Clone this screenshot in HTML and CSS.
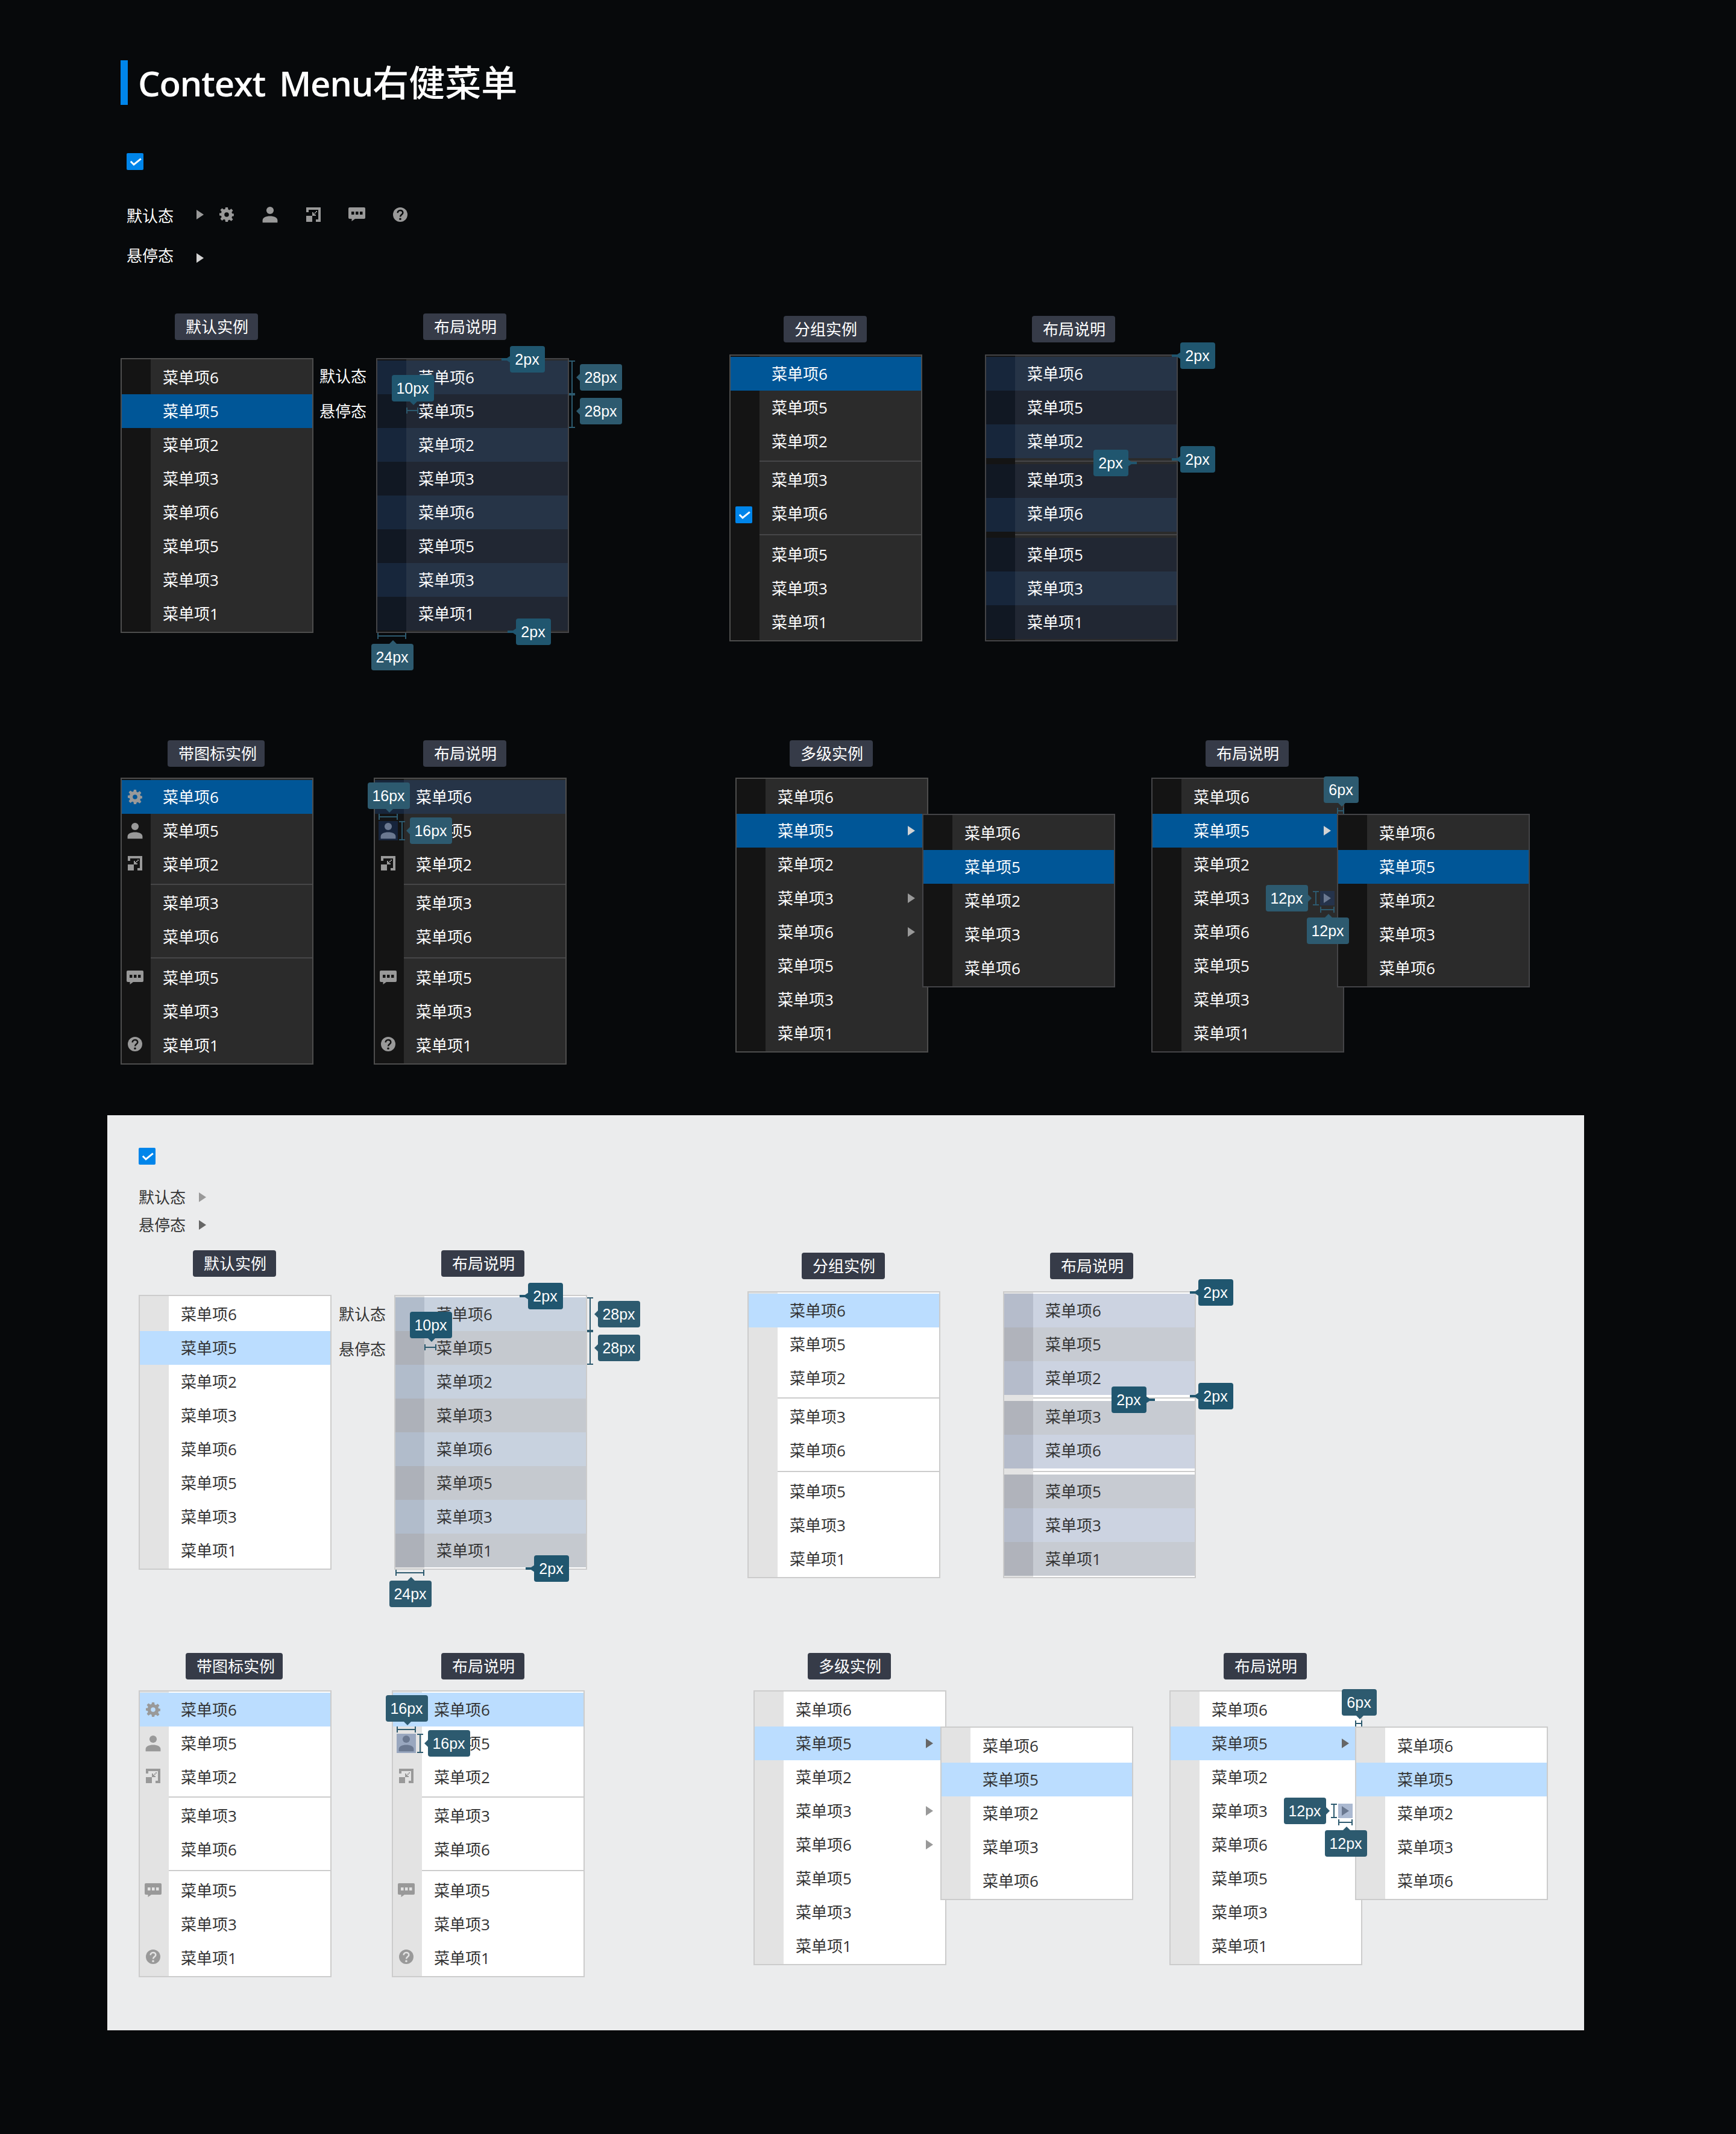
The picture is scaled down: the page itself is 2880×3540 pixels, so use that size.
FILE: index.html
```html
<!DOCTYPE html>
<html lang="zh-CN">
<head>
<meta charset="utf-8">
<title>Context Menu右健菜单</title>
<link rel="stylesheet" href="styles.css">
</head>
<body>
<svg class="defs" aria-hidden="true">
  <defs>
    <mask id="question-cut">
      <rect width="32" height="32" fill="#fff"/>
      <path d="M11.7 13.3c0-2.7 1.8-4.3 4.3-4.3s4.3 1.6 4.3 3.9c0 3.1-4.2 3.3-4.2 6.6" fill="none" stroke="#000" stroke-width="2.6"/>
      <circle cx="16" cy="23.2" r="1.8" fill="#000"/>
    </mask>
    <symbol id="gear" viewBox="0 0 32 32">
      <path fill-rule="evenodd" d="M14 4h4l.5 3.6 2.2.9 2.9-2.2 2.9 2.9-2.2 2.9.9 2.2 2.7.2v3.9l-2.7.4-.9 2.2 2.2 2.9-2.9 2.9-2.9-2.2-2.2.9L18 28h-4l-.5-3.4-2.2-.9-2.9 2.2-2.9-2.9 2.2-2.9-.9-2.2-2.8-.4v-3.9l2.8-.2.9-2.2-2.2-2.9 2.9-2.9 2.9 2.2 2.2-.9zM16 12.2a3.8 3.8 0 1 0 0 7.6 3.8 3.8 0 0 0 0-7.6z"/>
    </symbol>
    <symbol id="person" viewBox="0 0 32 32">
      <circle cx="16" cy="9" r="6.1"/>
      <path d="M3.6 29.2v-3.7c0-4.6 5.6-7 12.4-7s12.4 2.4 12.4 7v3.7z"/>
    </symbol>
    <symbol id="expand" viewBox="0 0 32 32">
      <path d="M4 4h24v24h-8v-4h4V8H8v4H4zM4 18h10v10H4zM14 12h2v2h2v-2h2v-2h2v2h-2v2h-2v2h2v2h-6z"/>
    </symbol>
    <symbol id="chat" viewBox="0 0 32 32">
      <path fill-rule="evenodd" d="M4 4h24a2 2 0 0 1 2 2v15a2 2 0 0 1-2 2H13l-5.5 4V23H4a2 2 0 0 1-2-2V6a2 2 0 0 1 2-2zM7 11v5h4.500v-5zM14 11v5h4.500v-5zM21 11v5h4.500v-5z"/>
    </symbol>
    <symbol id="question" viewBox="0 0 32 32">
      <circle cx="16" cy="16" r="12" mask="url(#question-cut)"/>
    </symbol>
    <symbol id="arrow" viewBox="0 0 12 16"><path d="M0 0l12 8-12 8z"/></symbol>
    <symbol id="check" viewBox="0 0 28 28"><path d="M6.800 13.800L12 19 23.800 9.300" fill="none" stroke="#fff" stroke-width="3"/></symbol>
  </defs>
</svg>

<main class="sheet">
  <header class="header">
    <h1 class="title"><span class="title-latin">Context Menu</span>右健菜单</h1>
  </header>

  <section class="theme dark">
    <svg class="checkbox"><use href="#check"/></svg>
    <div class="legend">
      <div class="legend-row"><span class="legend-label">默认态</span><svg class="arrow"><use href="#arrow"/></svg>
        <div class="legend-icons"><svg class="icon"><use href="#gear"/></svg><svg class="icon"><use href="#person"/></svg><svg class="icon"><use href="#expand"/></svg><svg class="icon"><use href="#chat"/></svg><svg class="icon"><use href="#question"/></svg></div></div>
      <div class="legend-row hovered"><span class="legend-label">悬停态</span><svg class="arrow strong"><use href="#arrow"/></svg></div>
    </div>

    <div class="row row-basic">
      <section class="figure">
        <h2 class="tag">默认实例</h2>
        <div class="stage">
          <ul class="menu"><li><span>菜单项6</span></li><li class="active"><span>菜单项5</span></li><li><span>菜单项2</span></li><li><span>菜单项3</span></li><li><span>菜单项6</span></li><li><span>菜单项5</span></li><li><span>菜单项3</span></li><li><span>菜单项1</span></li></ul>
        </div>
      </section>
      <div class="states"><span>默认态</span><span>悬停态</span></div>
      <section class="figure layout">
        <h2 class="tag">布局说明</h2>
        <div class="stage">
          <ul class="menu muted"><li class="band-a"><span>菜单项6</span></li><li class="band-b"><span>菜单项5</span></li><li class="band-a"><span>菜单项2</span></li><li class="band-b"><span>菜单项3</span></li><li class="band-a"><span>菜单项6</span></li><li class="band-b"><span>菜单项5</span></li><li class="band-a"><span>菜单项3</span></li><li class="band-b"><span>菜单项1</span></li></ul>
          <i class="ruler-v item-one-ruler"></i><i class="ruler-v item-two-ruler"></i><i class="ruler-h indent-ruler"></i><i class="ruler-h gutter-ruler"></i>
          <b class="px short deep stub-left pad-top">2px</b>
          <b class="px deep down indent">10px</b>
          <b class="px left item-one">28px</b>
          <b class="px left item-two">28px</b>
          <b class="px short deep stub-left pad-bottom">2px</b>
          <b class="px up gutter">24px</b>
        </div>
      </section>
      <section class="figure grouped">
        <h2 class="tag">分组实例</h2>
        <div class="stage">
          <ul class="menu"><li class="active"><span>菜单项6</span></li><li><span>菜单项5</span></li><li><span>菜单项2</span></li><li class="divider"></li><li class="lift"><span>菜单项3</span></li><li class="lift"><svg class="checkbox"><use href="#check"/></svg><span>菜单项6</span></li><li class="divider"></li><li><span>菜单项5</span></li><li><span>菜单项3</span></li><li><span>菜单项1</span></li></ul>
        </div>
      </section>
      <section class="figure grouped-layout">
        <h2 class="tag">布局说明</h2>
        <div class="stage">
          <ul class="menu muted"><li class="band-a"><span>菜单项6</span></li><li class="band-b"><span>菜单项5</span></li><li class="band-a"><span>菜单项2</span></li><li class="divider"></li><li class="band-b lift"><span>菜单项3</span></li><li class="band-a lift"><span>菜单项6</span></li><li class="divider"></li><li class="band-b"><span>菜单项5</span></li><li class="band-a"><span>菜单项3</span></li><li class="band-b"><span>菜单项1</span></li></ul>
          <b class="px short deep stub-left edge-top">2px</b>
          <b class="px short deep stub-left group-top">2px</b>
          <b class="px short deep stub-right group-bottom">2px</b>
        </div>
      </section>
    </div>

    <div class="row row-rich">
      <section class="figure iconic">
        <h2 class="tag wide">带图标实例</h2>
        <div class="stage">
          <ul class="menu"><li class="active"><svg class="icon"><use href="#gear"/></svg><span>菜单项6</span></li><li><svg class="icon"><use href="#person"/></svg><span>菜单项5</span></li><li><svg class="icon raised"><use href="#expand"/></svg><span>菜单项2</span></li><li class="divider"></li><li class="lift"><span>菜单项3</span></li><li class="lift"><span>菜单项6</span></li><li class="divider"></li><li><svg class="icon"><use href="#chat"/></svg><span>菜单项5</span></li><li><span>菜单项3</span></li><li><svg class="icon raised"><use href="#question"/></svg><span>菜单项1</span></li></ul>
        </div>
      </section>
      <section class="figure iconic-layout">
        <h2 class="tag">布局说明</h2>
        <div class="stage">
          <ul class="menu"><li class="band-first"><span>菜单项6</span></li><li><svg class="icon"><use href="#person"/></svg><span>菜单项5</span></li><li><svg class="icon raised"><use href="#expand"/></svg><span>菜单项2</span></li><li class="divider"></li><li class="lift"><span>菜单项3</span></li><li class="lift"><span>菜单项6</span></li><li class="divider"></li><li><svg class="icon"><use href="#chat"/></svg><span>菜单项5</span></li><li><span>菜单项3</span></li><li><svg class="icon raised"><use href="#question"/></svg><span>菜单项1</span></li></ul>
          <i class="area icon-area"></i><i class="ruler-h icon-width-ruler"></i><i class="ruler-v icon-height-ruler"></i>
          <b class="px down icon-width">16px</b>
          <b class="px left icon-height">16px</b>
        </div>
      </section>
      <section class="figure nested">
        <h2 class="tag">多级实例</h2>
        <div class="stage">
          <ul class="menu"><li><span>菜单项6</span></li><li class="active"><span>菜单项5</span><svg class="arrow strong"><use href="#arrow"/></svg></li><li><span>菜单项2</span></li><li><span>菜单项3</span><svg class="arrow"><use href="#arrow"/></svg></li><li><span>菜单项6</span><svg class="arrow"><use href="#arrow"/></svg></li><li><span>菜单项5</span></li><li><span>菜单项3</span></li><li><span>菜单项1</span></li></ul>
          <ul class="menu submenu muted"><li><span>菜单项6</span></li><li class="active"><span>菜单项5</span></li><li><span>菜单项2</span></li><li><span>菜单项3</span></li><li><span>菜单项6</span></li></ul>
        </div>
      </section>
      <section class="figure nested-layout">
        <h2 class="tag">布局说明</h2>
        <div class="stage">
          <ul class="menu muted"><li><span>菜单项6</span></li><li class="active"><span>菜单项5</span><svg class="arrow strong"><use href="#arrow"/></svg></li><li><span>菜单项2</span></li><li><span>菜单项3</span><svg class="arrow"><use href="#arrow"/></svg></li><li><span>菜单项6</span></li><li><span>菜单项5</span></li><li><span>菜单项3</span></li><li><span>菜单项1</span></li></ul>
          <ul class="menu submenu muted"><li><span>菜单项6</span></li><li class="active"><span>菜单项5</span></li><li><span>菜单项2</span></li><li><span>菜单项3</span></li><li><span>菜单项6</span></li></ul>
          <i class="area arrow-area"></i><i class="ruler-h overlap-ruler"></i><i class="ruler-v arrow-height-ruler"></i><i class="ruler-h arrow-width-ruler"></i>
          <b class="px short down overlap">6px</b>
          <b class="px right arrow-height">12px</b>
          <b class="px up arrow-width">12px</b>
        </div>
      </section>
    </div>
  </section>

  <section class="theme light">
    <svg class="checkbox"><use href="#check"/></svg>
    <div class="legend">
      <div class="legend-row"><span class="legend-label">默认态</span><svg class="arrow"><use href="#arrow"/></svg></div>
      <div class="legend-row hovered"><span class="legend-label">悬停态</span><svg class="arrow strong"><use href="#arrow"/></svg></div>
    </div>

    <div class="row row-basic">
      <section class="figure">
        <h2 class="tag">默认实例</h2>
        <div class="stage">
          <ul class="menu"><li><span>菜单项6</span></li><li class="active"><span>菜单项5</span></li><li><span>菜单项2</span></li><li><span>菜单项3</span></li><li><span>菜单项6</span></li><li><span>菜单项5</span></li><li><span>菜单项3</span></li><li><span>菜单项1</span></li></ul>
        </div>
      </section>
      <div class="states"><span>默认态</span><span>悬停态</span></div>
      <section class="figure layout">
        <h2 class="tag">布局说明</h2>
        <div class="stage">
          <ul class="menu muted"><li class="band-a"><span>菜单项6</span></li><li class="band-b"><span>菜单项5</span></li><li class="band-a"><span>菜单项2</span></li><li class="band-b"><span>菜单项3</span></li><li class="band-a"><span>菜单项6</span></li><li class="band-b"><span>菜单项5</span></li><li class="band-a"><span>菜单项3</span></li><li class="band-b"><span>菜单项1</span></li></ul>
          <i class="ruler-v item-one-ruler"></i><i class="ruler-v item-two-ruler"></i><i class="ruler-h indent-ruler"></i><i class="ruler-h gutter-ruler"></i>
          <b class="px short deep stub-left pad-top">2px</b>
          <b class="px deep down indent">10px</b>
          <b class="px left item-one">28px</b>
          <b class="px left item-two">28px</b>
          <b class="px short deep stub-left pad-bottom">2px</b>
          <b class="px up gutter">24px</b>
        </div>
      </section>
      <section class="figure grouped">
        <h2 class="tag">分组实例</h2>
        <div class="stage">
          <ul class="menu"><li class="active"><span>菜单项6</span></li><li><span>菜单项5</span></li><li><span>菜单项2</span></li><li class="divider"></li><li class="lift"><span>菜单项3</span></li><li class="lift"><span>菜单项6</span></li><li class="divider"></li><li><span>菜单项5</span></li><li><span>菜单项3</span></li><li><span>菜单项1</span></li></ul>
        </div>
      </section>
      <section class="figure grouped-layout">
        <h2 class="tag">布局说明</h2>
        <div class="stage">
          <ul class="menu muted"><li class="band-a"><span>菜单项6</span></li><li class="band-b"><span>菜单项5</span></li><li class="band-a"><span>菜单项2</span></li><li class="divider"></li><li class="band-b lift"><span>菜单项3</span></li><li class="band-a lift"><span>菜单项6</span></li><li class="divider"></li><li class="band-b"><span>菜单项5</span></li><li class="band-a"><span>菜单项3</span></li><li class="band-b"><span>菜单项1</span></li></ul>
          <b class="px short deep stub-left edge-top">2px</b>
          <b class="px short deep stub-left group-top">2px</b>
          <b class="px short deep stub-right group-bottom">2px</b>
        </div>
      </section>
    </div>

    <div class="row row-rich">
      <section class="figure iconic">
        <h2 class="tag wide">带图标实例</h2>
        <div class="stage">
          <ul class="menu"><li class="active"><svg class="icon"><use href="#gear"/></svg><span>菜单项6</span></li><li><svg class="icon"><use href="#person"/></svg><span>菜单项5</span></li><li><svg class="icon raised"><use href="#expand"/></svg><span>菜单项2</span></li><li class="divider"></li><li class="lift"><span>菜单项3</span></li><li class="lift"><span>菜单项6</span></li><li class="divider"></li><li><svg class="icon"><use href="#chat"/></svg><span>菜单项5</span></li><li><span>菜单项3</span></li><li><svg class="icon raised"><use href="#question"/></svg><span>菜单项1</span></li></ul>
        </div>
      </section>
      <section class="figure iconic-layout">
        <h2 class="tag">布局说明</h2>
        <div class="stage">
          <ul class="menu"><li class="band-first"><span>菜单项6</span></li><li><svg class="icon"><use href="#person"/></svg><span>菜单项5</span></li><li><svg class="icon raised"><use href="#expand"/></svg><span>菜单项2</span></li><li class="divider"></li><li class="lift"><span>菜单项3</span></li><li class="lift"><span>菜单项6</span></li><li class="divider"></li><li><svg class="icon"><use href="#chat"/></svg><span>菜单项5</span></li><li><span>菜单项3</span></li><li><svg class="icon raised"><use href="#question"/></svg><span>菜单项1</span></li></ul>
          <i class="area icon-area"></i><i class="ruler-h icon-width-ruler"></i><i class="ruler-v icon-height-ruler"></i>
          <b class="px down icon-width">16px</b>
          <b class="px left icon-height">16px</b>
        </div>
      </section>
      <section class="figure nested">
        <h2 class="tag">多级实例</h2>
        <div class="stage">
          <ul class="menu"><li><span>菜单项6</span></li><li class="active"><span>菜单项5</span><svg class="arrow strong"><use href="#arrow"/></svg></li><li><span>菜单项2</span></li><li><span>菜单项3</span><svg class="arrow"><use href="#arrow"/></svg></li><li><span>菜单项6</span><svg class="arrow"><use href="#arrow"/></svg></li><li><span>菜单项5</span></li><li><span>菜单项3</span></li><li><span>菜单项1</span></li></ul>
          <ul class="menu submenu muted"><li><span>菜单项6</span></li><li class="active"><span>菜单项5</span></li><li><span>菜单项2</span></li><li><span>菜单项3</span></li><li><span>菜单项6</span></li></ul>
        </div>
      </section>
      <section class="figure nested-layout">
        <h2 class="tag">布局说明</h2>
        <div class="stage">
          <ul class="menu muted"><li><span>菜单项6</span></li><li class="active"><span>菜单项5</span><svg class="arrow strong"><use href="#arrow"/></svg></li><li><span>菜单项2</span></li><li><span>菜单项3</span><svg class="arrow"><use href="#arrow"/></svg></li><li><span>菜单项6</span></li><li><span>菜单项5</span></li><li><span>菜单项3</span></li><li><span>菜单项1</span></li></ul>
          <ul class="menu submenu muted"><li><span>菜单项6</span></li><li class="active"><span>菜单项5</span></li><li><span>菜单项2</span></li><li><span>菜单项3</span></li><li><span>菜单项6</span></li></ul>
          <i class="area arrow-area"></i><i class="ruler-h overlap-ruler"></i><i class="ruler-v arrow-height-ruler"></i><i class="ruler-h arrow-width-ruler"></i>
          <b class="px short down overlap">6px</b>
          <b class="px right arrow-height">12px</b>
          <b class="px up arrow-width">12px</b>
        </div>
      </section>
    </div>
  </section>
</main>
</body>
</html>
```

FILE: styles.css
```css
* { box-sizing: border-box; }

body {
  margin: 0;
  background: #07090b;
  font: 400 26px/56px "Open Sans", "Noto Sans CJK SC", sans-serif;
}

h1, h2, ul { margin: 0; padding: 0; font-weight: inherit; font-size: inherit; }
ul { list-style: none; }
svg { display: block; }
.defs { position: absolute; width: 0; height: 0; }

.sheet { width: 2880px; height: 3540px; padding-top: 100px; overflow: hidden; }

/* Page title */
.header {
  margin-left: 200px;
  height: 74px;
  border-left: 12px solid #0085ea;
  padding-left: 17px;
}
.title {
  color: #fff;
  font-size: 60px;
  font-weight: 500;
  line-height: 74px;
  white-space: nowrap;
}
.title-latin { font-size: 58px; font-weight: 600; letter-spacing: -1.3px; word-spacing: 9px; }

/* Themes */
.dark {
  --body: #2b2b2b;
  --gutter: #141414;
  --text: #fff;
  --border: #4d4d4d;
  --border-muted: #444447;
  --line: #464648;
  --active: #005697;
  --strong: #d3d3d3;
  --band-a: #263447;
  --band-a-gutter: #17263b;
  --band-b: #212733;
  --band-b-gutter: #111823;
  --callout: #2d5a6f;
  --ruler: #2d5a6f;
  height: 1676px;
  padding: 80px 0 0 200px;
}
.light {
  --body: #fff;
  --gutter: #e3e3e3;
  --text: #333;
  --border: #ccc;
  --border-muted: #ccc;
  --line: #ccc;
  --active: #bbddff;
  --strong: #666;
  --band-a: #c8d2df;
  --band-a-gutter: #b1bccb;
  --band-b: #c5c9cf;
  --band-b-gutter: #adb1b9;
  --callout: #2d5a6f;
  --ruler: #2d5a6f;
  width: 2450px;
  height: 1518px;
  margin-left: 178px;
  padding: 54px 0 0 52px;
  background: #ebeced;
}
.theme { color: var(--text); }

.checkbox { width: 28px; height: 28px; border-radius: 2px; background: #0085ea; }
.icon { width: 32px; height: 32px; fill: #999; }
.arrow { width: 12px; height: 16px; fill: #999; }
.arrow.strong { fill: var(--strong); }

/* State legend */
.dark > .checkbox { margin-left: 10px; }
.legend-row { display: flex; height: 36px; line-height: 36px; }
.dark .legend { padding: 58px 0 0 10px; height: 238px; }
.dark .legend-label { width: 116px; }
.dark .legend .arrow { margin-top: 8px; }
.dark .hovered { margin-top: 30px; }
.dark .hovered .arrow { margin-top: 14px; }
.legend-icons { display: flex; gap: 40px; margin-left: 22px; }
.light .legend { padding-top: 36px; height: 142px; }
.light .legend-label { width: 100px; }
.light .legend .arrow { margin-top: 10px; }
.light .hovered { margin-top: 10px; }

/* Figures */
.row { display: flex; align-items: flex-start; }
.dark .row-basic { height: 708px; }
.light .row-basic { height: 668px; }
.figure { width: 320px; flex: none; }
.stage { position: relative; }
.states { flex: none; width: 104px; padding: 76px 0 0 10px; display: grid; grid-auto-rows: 58px; white-space: nowrap; }
.light .states { padding: 78px 0 0 12px; }

.tag {
  width: 138px;
  height: 44px;
  margin: 0 0 30px 90px;
  padding-left: 18px;
  border-radius: 4px;
  background: #363b48;
  color: #fff;
  line-height: 45px;
  white-space: nowrap;
}
.tag.wide { width: 161px; }
.layout .tag { margin-left: 78px; }
.grouped { margin: 4px 0 0 266px; }
.grouped .tag { margin-bottom: 20px; }
.grouped-layout { margin: 4px 0 0 104px; }
.grouped-layout .tag { margin: 0 0 20px 78px; }
.iconic .tag { margin: 0 0 18px 78px; }
.iconic-layout { margin-left: 100px; }
.iconic-layout .tag { margin: 0 0 18px 82px; }
.nested { margin-left: 280px; }
.nested-layout { margin-left: 370px; }
.nested .tag, .nested-layout .tag { margin-bottom: 18px; }

/* Menus */
.menu {
  width: 320px;
  padding: 2px 0;
  border: 2px solid var(--border);
  background: linear-gradient(90deg, var(--gutter) 48px, var(--body) 48px) padding-box;
}
.menu.muted { border-color: var(--border-muted); }
.menu li {
  display: grid;
  grid-template-columns: 48px 1fr auto;
  align-items: center;
  height: 56px;
}
.menu li > span { grid-column: 2; padding-left: 20px; white-space: nowrap; }
.menu .icon { margin-left: 6px; }
.menu .checkbox { margin-left: 8px; }
.menu .raised { margin-bottom: 4px; }
.menu .arrow { margin-right: 20px; }
.menu .lift > span { height: 56px; line-height: 52px; }
.menu .active { background: var(--active); }
.menu .band-a, .dark .band-first { background: linear-gradient(90deg, var(--band-a-gutter) 48px, var(--band-a) 48px); }
.menu .band-b { background: linear-gradient(90deg, var(--band-b-gutter) 48px, var(--band-b) 48px); }
.light .band-first { background: var(--active); }
.menu .divider {
  height: 10px;
  background: linear-gradient(var(--line), var(--line)) 48px 4px / 268px 2px no-repeat;
}
.submenu { position: absolute; left: 310px; top: 60px; }
.nested-layout .submenu { left: 308px; }
.light .grouped-layout {
  --band-a: #ccd3e1;
  --band-a-gutter: #b5bccb;
  --band-b: #c7cbd2;
  --band-b-gutter: #b0b3bb;
}

/* Measurement callouts laid over the menus */
.px {
  position: absolute;
  width: 70px;
  height: 44px;
  padding-right: 1px;
  border-radius: 4px;
  background: var(--callout);
  color: #fff;
  font: 400 25px/44px "Liberation Sans", sans-serif;
  text-align: center;
}
.px.short { width: 58px; }
.px.deep { background: #20566f; }
.px::before { content: ""; position: absolute; background: inherit; }
.px.left::before { left: -6px; top: 15px; width: 7px; height: 14px; clip-path: polygon(100% 0, 0 50%, 100% 100%); }
.px.right::before { right: -6px; top: 15px; width: 7px; height: 14px; clip-path: polygon(0 0, 100% 50%, 0 100%); }
.px.down::before { left: 29px; bottom: -6px; width: 14px; height: 7px; clip-path: polygon(0 0, 100% 0, 50% 100%); }
.px.up::before { left: 29px; top: -6px; width: 14px; height: 7px; clip-path: polygon(0 100%, 100% 100%, 50% 0); }
.px.short.down::before { left: 23px; }
.px.stub-left::before { left: -14px; top: 16px; width: 15px; height: 12px; clip-path: polygon(0 4px, 9px 4px, 15px 0, 15px 12px, 9px 8px, 0 8px); }
.px.stub-right::before { right: -14px; top: 16px; width: 15px; height: 12px; clip-path: polygon(15px 4px, 6px 4px, 0 0, 0 12px, 6px 8px, 15px 8px); }

.ruler-h, .ruler-v { position: absolute; }
.ruler-h { height: 10px; border: solid var(--ruler); border-width: 0 2px; background: linear-gradient(var(--ruler), var(--ruler)) 0 4px / 100% 2px no-repeat; }
.ruler-v { width: 10px; border: solid var(--ruler); border-width: 2px 0; background: linear-gradient(var(--ruler), var(--ruler)) 4px 0 / 2px 100% no-repeat; }
.area { position: absolute; background: rgba(28, 66, 129, .37); }

.pad-top { left: 222px; top: -20px; }
.pad-bottom { left: 232px; top: 432px; }
.indent { left: 26px; top: 28px; }
.indent-ruler { left: 50px; top: 82px; width: 20px; }
.item-one { left: 338px; top: 10px; }
.item-one-ruler { left: 320px; top: 4px; height: 56px; }
.item-two { left: 338px; top: 66px; }
.item-two-ruler { left: 320px; top: 60px; height: 56px; }
.gutter { left: -8px; top: 474px; }
.gutter-ruler { left: 2px; top: 456px; width: 48px; }

.edge-top { left: 324px; top: -20px; }
.group-top { left: 324px; top: 152px; }
.group-bottom { left: 180px; top: 158px; }

.icon-area { left: 8px; top: 72px; width: 32px; height: 32px; }
.icon-width { left: -10px; top: 8px; }
.icon-width-ruler { left: 8px; top: 60px; width: 32px; }
.icon-height { left: 60px; top: 66px; }
.icon-height-ruler { left: 42px; top: 72px; height: 32px; }

.arrow-area { left: 280px; top: 188px; width: 24px; height: 24px; }
.overlap { left: 286px; top: -2px; }
.overlap-ruler { left: 308px; top: 50px; width: 12px; }
.arrow-height { left: 190px; top: 178px; }
.arrow-height-ruler { left: 268px; top: 188px; height: 24px; }
.arrow-width { left: 258px; top: 232px; }
.arrow-width-ruler { left: 280px; top: 214px; width: 24px; }
```
